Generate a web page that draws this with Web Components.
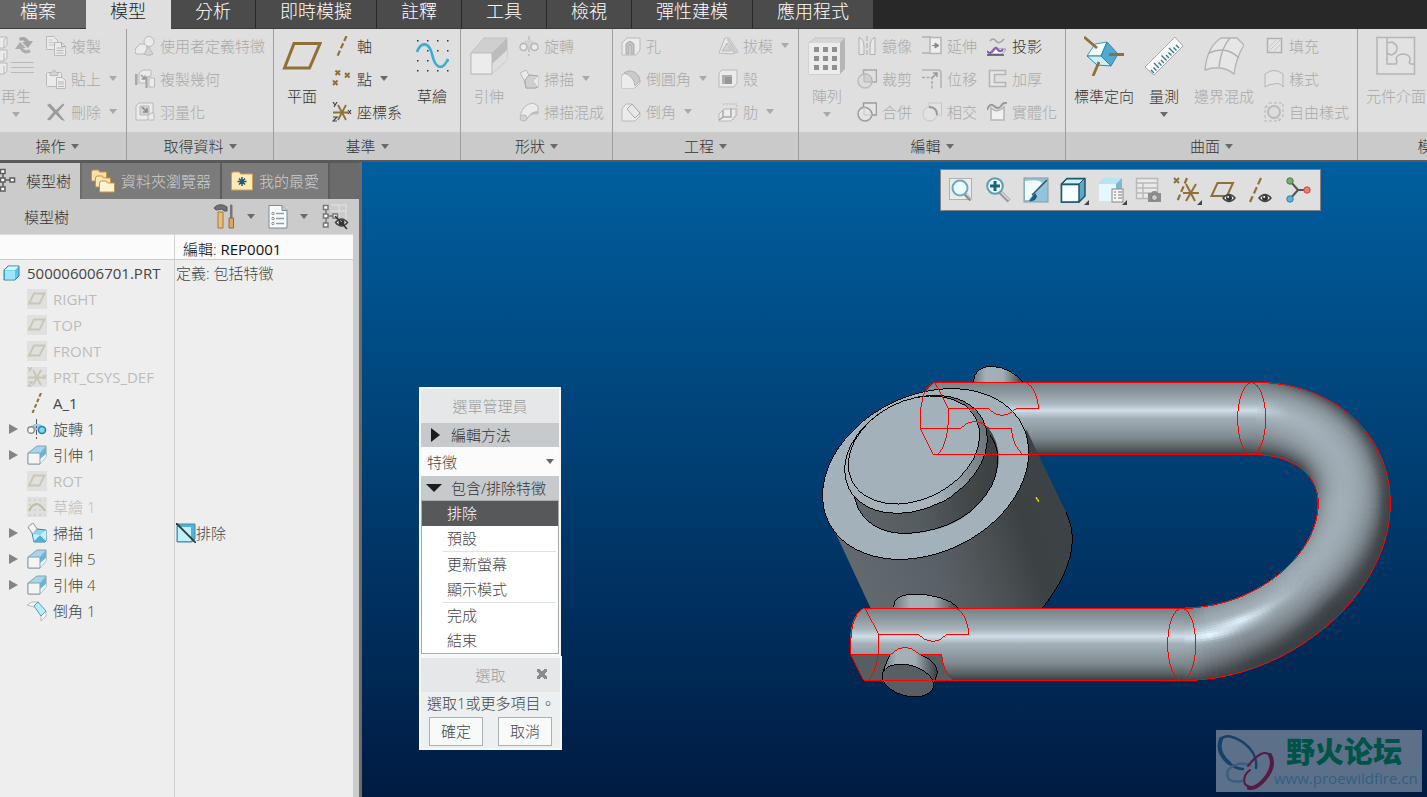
<!DOCTYPE html>
<html lang="zh-Hant">
<head>
<meta charset="utf-8">
<title>500006006701.PRT</title>
<style>
html,body{margin:0;height:100%}
body{font:300 15px/20px "Open Sans","Noto Sans CJK TC",sans-serif;color:#3a3a3a;background:#6b6b6b;overflow:hidden}
</style>
</head>
<body>
<app-shell>
  <ribbon-tabs slot="tabs"></ribbon-tabs>

  <ribbon-group slot="ribbon" name="操作" first style="--gw:139px">
    <ribbon-button big icon="regen" label="再生" menu disabled></ribbon-button>
    <ribbon-column>
      <ribbon-button icon="copy" label="複製" disabled></ribbon-button>
      <ribbon-button icon="paste" label="貼上" menu disabled></ribbon-button>
      <ribbon-button icon="del" label="刪除" menu disabled></ribbon-button>
    </ribbon-column>
  </ribbon-group>
  <ribbon-group slot="ribbon" name="取得資料" inset style="--gw:147px">
    <ribbon-column>
      <ribbon-button icon="udf" label="使用者定義特徵" disabled></ribbon-button>
      <ribbon-button icon="copygeom" label="複製幾何" disabled></ribbon-button>
      <ribbon-button icon="shrink" label="羽量化" disabled></ribbon-button>
    </ribbon-column>
  </ribbon-group>
  <ribbon-group slot="ribbon" name="基準" style="--gw:187px">
    <ribbon-button big icon="plane" label="平面"></ribbon-button>
    <ribbon-column style="--w:74px">
      <ribbon-button icon="axis" label="軸"></ribbon-button>
      <ribbon-button icon="point" label="點" menu></ribbon-button>
      <ribbon-button icon="csys" label="座標系"></ribbon-button>
    </ribbon-column>
    <ribbon-button big icon="sketch" label="草繪"></ribbon-button>
  </ribbon-group>
  <ribbon-group slot="ribbon" name="形狀" style="--gw:152px">
    <ribbon-button big icon="extrude" label="引伸" disabled></ribbon-button>
    <ribbon-column>
      <ribbon-button icon="revolve" label="旋轉" disabled></ribbon-button>
      <ribbon-button icon="sweep" label="掃描" menu disabled></ribbon-button>
      <ribbon-button icon="sweptblend" label="掃描混成" disabled></ribbon-button>
    </ribbon-column>
  </ribbon-group>
  <ribbon-group slot="ribbon" name="工程" inset style="--gw:186px">
    <ribbon-column style="--w:97px">
      <ribbon-button icon="hole" label="孔" disabled></ribbon-button>
      <ribbon-button icon="round" label="倒圓角" menu disabled></ribbon-button>
      <ribbon-button icon="chamfer" label="倒角" menu disabled></ribbon-button>
    </ribbon-column>
    <ribbon-column>
      <ribbon-button icon="draft" label="拔模" menu disabled></ribbon-button>
      <ribbon-button icon="shell" label="殼" disabled></ribbon-button>
      <ribbon-button icon="rib" label="肋" menu disabled></ribbon-button>
    </ribbon-column>
  </ribbon-group>
  <ribbon-group slot="ribbon" name="編輯" style="--gw:267px">
    <ribbon-button big icon="pattern" label="陣列" menu disabled></ribbon-button>
    <ribbon-column style="--w:65px">
      <ribbon-button icon="mirror" label="鏡像" disabled></ribbon-button>
      <ribbon-button icon="trim" label="裁剪" disabled></ribbon-button>
      <ribbon-button icon="merge" label="合併" disabled></ribbon-button>
    </ribbon-column>
    <ribbon-column style="--w:65px">
      <ribbon-button icon="extend" label="延伸" disabled></ribbon-button>
      <ribbon-button icon="offset" label="位移" disabled></ribbon-button>
      <ribbon-button icon="intersect" label="相交" disabled></ribbon-button>
    </ribbon-column>
    <ribbon-column>
      <ribbon-button icon="project" label="投影"></ribbon-button>
      <ribbon-button icon="thicken" label="加厚" disabled></ribbon-button>
      <ribbon-button icon="solidify" label="實體化" disabled></ribbon-button>
    </ribbon-column>
  </ribbon-group>
  <ribbon-group slot="ribbon" name="曲面" style="--gw:292px">
    <ribbon-button big icon="orient" label="標準定向" style="--w:76px"></ribbon-button>
    <ribbon-button big icon="measure" label="量測" menu style="--w:44px"></ribbon-button>
    <ribbon-button big icon="boundary" label="邊界混成" disabled style="--w:76px"></ribbon-button>
    <ribbon-column>
      <ribbon-button icon="fill" label="填充" disabled></ribbon-button>
      <ribbon-button icon="style" label="樣式" disabled></ribbon-button>
      <ribbon-button icon="freestyle" label="自由樣式" disabled></ribbon-button>
    </ribbon-column>
  </ribbon-group>
  <ribbon-group slot="ribbon" name="模型意圖" style="--gw:193px">
    <ribbon-button big icon="component" label="元件介面" disabled style="--w:76px"></ribbon-button>
  </ribbon-group>

  <side-panel slot="side"><model-tree></model-tree></side-panel>

  <graphics-area slot="view">
    <view-toolbar slot="toolbar"></view-toolbar>
    <menu-manager slot="menu"></menu-manager>
    <forum-mark slot="mark"></forum-mark>
  </graphics-area>
</app-shell>

<script>
const B = '#8f7138', G = 'fill="#ebebeb" stroke="#b9b9b9"', GD = 'fill="#d3d3d3" stroke="#b9b9b9"', N = 'fill="none"';
const csysS = (c, d) => `<path d="M6 3l8 15M14 3L6 18M1 10.500h15" ${N} stroke="${c}" stroke-width="1.800"/><path d="M1 0l2 3M5 0L2 5M1 15h4l-4 4h4M16 8l3 4M19 8l-3 4" ${N} stroke="${d}" stroke-width="1.200"/>`;
const extrudeS = (a, b, f, s) => `<path d="M1 8L10 1H19V12L13 19H1Z" fill="${a}" stroke="${s}"/><path d="M19 1V12L13 19V8Z" fill="${b}"/><path d="M13 19V14L19 9V12Z" fill="#e8fbff"/><path d="M1 8h12v11H1z" fill="${f}" stroke="${s}"/>`;
const treeG = c => `<g fill="#fff" stroke="${c}" stroke-width="1.500"><path d="M4 6v14M4 12h7" ${N}/><rect x="1.500" y="1.500" width="4.500" height="4"/><rect x="1.500" y="10" width="4.500" height="4"/><rect x="1.500" y="19" width="4.500" height="4"/><rect x="11" y="10" width="4.500" height="4"/></g>`;
const eye = (x, y) => `<g transform="translate(${x} ${y})"><path d="M-6 0Q0-7 6 0Q0 7-6 0Z" fill="#f4f4f4" stroke="#444" stroke-width="1.500"/><circle r="3" fill="#333"/><circle cx="-.8" cy="-1" r="1" fill="#fff"/></g>`;
const tinyX = (x, y, s) => `<path d="M${x} ${y}l${s} ${s}M${x + s} ${y}l-${s} ${s}" ${N} stroke="${B}" stroke-width="2"/>`;

/* name: [width, height, drawing] */
const ICONS = {
regen:[40,40,`<g ${G}><path d="M-2 4l4-3h9v8l-3 3h-10zM-2 17l4-3h9v8l-3 3h-10zM-2 30l4-3h9v8l-3 3h-10z"/><path d="M8 4v8M8 4l3-3M8 17v8M8 30v8" ${N}/></g><g fill="#a5a5a5"><path d="M23 2q6-3 10 3l4 0-5 7-6-6h3q-2-3-5-1z" /><path d="M35 16q-7 4-11-3h-5l5-7 6 6h-3q3 4 6 1z" opacity=".85"/></g><path d="M15 26.500h23M15 31.500h23M15 36.500h23" stroke="#b9b9b9"/>`],
copy:[20,20,`<path d="M.5.500h7l4 4v9H.5z" ${G}/><path d="M2.500 4h4M2.500 6.500h6M2.500 9h6" stroke="#c5c5c5"/><path d="M8.500 6.500h7l4 4v9H8.500z" ${G}/><path d="M15.500 6.500v4h4" ${N} stroke="#aaa"/><path d="M10.500 12h7M10.500 14.500h7M10.500 17h7" stroke="#b5b5b5"/>`],
paste:[20,20,`<rect x=".5" y="3.500" width="15" height="14" rx="1" ${G}/><path d="M4 3.500h2q2-5 4 0h2v3H4z" ${GD}/><path d="M10.500 8.500h6l3 3v8h-9z" ${G}/><path d="M12 13h6M12 15h6M12 17.500h6" stroke="#b5b5b5"/>`],
del:[20,20,`<path d="M1 3L4 1.500 10 8 17 1.500 18.500 2.500 12 10 19 19 15.500 18 9.500 12 4 18.500 1 17.500 7.500 10Z" fill="#9c9c9c"/>`],
udf:[20,20,`<path d="M1 12l4-4h7v8l-2 2H1q-2-3 0-6z" ${G}/><path d="M13 8q3 8 5 10-4 3-9 0l3-5z" ${GD}/><circle cx="14" cy="5.500" r="5" ${G}/>`],
copygeom:[20,20,`<path d="M.5 5v11M1.500 5v11" stroke="#a8a8a8" stroke-width="2"/><path d="M4 4l4-3h8v6l-5 1v6H4z" ${G}/><path d="M6 6l4 4M10 6.500V10H6.500" ${N} stroke="#999" stroke-width="1.500"/><path d="M11.500 8v11" stroke="#a0a0a0" stroke-width="2"/><path d="M14 9h5.500v9H14z" ${G}/>`],
shrink:[20,20,`<path d="M1 4l3-3h14v9l-4 5-2 3H1z" ${G}/><path d="M5 4h9v9H5z" ${GD}/><path d="M7 5l5 5M12 6v4H8" ${N} stroke="#888" stroke-width="1.600"/><path d="M13 14l3-3h3v7h-6z" ${G}/>`],
plane:[40,40,`<path d="M12 7.500H38L27.500 32H2.500Z" ${N} stroke="${B}" stroke-width="3"/>`],
axis:[20,20,`<path d="M14.500 0L5.500 20" ${N} stroke="${B}" stroke-width="2.200" stroke-dasharray="5.500 2.500"/>`],
point:[20,20,tinyX(3.500,1.500,4.500)+tinyX(13,4,4.500)+tinyX(1,11.500,4.500)],
csys:[20,20,csysS(B,'#444')],
sketch:[40,40,`<g fill="#333"><rect x="5" y="4" width="1.500" height="1.500"/><rect x="15" y="4" width="1.500" height="1.500"/><rect x="25" y="4" width="1.500" height="1.500"/><rect x="35" y="4" width="1.500" height="1.500"/><rect x="15" y="14" width="1.500" height="1.500"/><rect x="25" y="14" width="1.500" height="1.500"/><rect x="35" y="14" width="1.500" height="1.500"/><rect x="5" y="24" width="1.500" height="1.500"/><rect x="15" y="24" width="1.500" height="1.500"/><rect x="35" y="24" width="1.500" height="1.500"/><rect x="5" y="34" width="1.500" height="1.500"/><rect x="15" y="34" width="1.500" height="1.500"/><rect x="25" y="34" width="1.500" height="1.500"/><rect x="35" y="34" width="1.500" height="1.500"/></g><path d="M5 16C9 5 17 6 20 18C23 32 30 36 36 23" ${N} stroke="#36addd" stroke-width="2.600"/>`],
extrude:[40,40,`<path d="M2 17L15 2H38V24L23 38H2Z" fill="#cfcfcf" stroke="#c2c2c2"/><path d="M38 2V24L23 38V17Z" fill="#bcbcbc"/><path d="M23 38V28L38 14V24Z" fill="#dedede"/><path d="M2 17h21v21H2z" fill="#ececec" stroke="#bbb"/>`],
revolve:[20,20,`<path d="M10 0v20" stroke="#aaa" stroke-dasharray="5 2 2 2"/><path d="M2 7q8-6 16 0l-2 6h-4l-2-2-2 2H4z" fill="#d2d2d2"/><g fill="#ebebeb" stroke="#b5b5b5" stroke-width="1.500"><circle cx="4.500" cy="11" r="3.500"/><circle cx="15.500" cy="11" r="3.500"/></g>`],
sweep:[20,20,`<path d="M1 4l6-3 3 5 9 1v11l-3 1H7L5 11z" ${G}/><path d="M6 11l4-5 9 1-5 5 5 6-3 1H7z" fill="#cfcfcf" stroke="#a9a9a9"/><path d="M14 12l5-5v11z" fill="#e9e9e9"/>`],
sweptblend:[20,20,`<path d="M1 14Q4 2 14 1L19 4V12Q11 10 8 17z" ${G}/><path d="M8 17Q11 9 19 9v3q-8-1-11 5z" fill="#bbb"/><ellipse cx="4.500" cy="16" rx="3.500" ry="3" ${GD}/>`],
hole:[20,20,`<path d="M1 7l5-5h13v12l-4 5H1z" ${G}/><path d="M5 18V8q4-5 8 0l0 10h-3V9H8v9z" fill="#c4c4c4" stroke="#aaa"/>`],
round:[20,20,`<path d="M1 6q4-4 8-4 9 1 10 10v2l-5 5H1z" ${G}/><path d="M3 4q3-2 6-2 9 1 10 10l-5 5Q13 7 3 4z" fill="#cacaca" stroke="#b5b5b5"/><path d="M1 7q12 1 12 12H1z" fill="#ececec"/>`],
chamfer:[20,20,`<path d="M1 7l4-5h6l8 9v3l-5 5H1z" ${G}/><path d="M6 7l5-5 8 9-5 5z" fill="#e8e8e8" stroke="#a8a8a8"/>`],
draft:[20,20,`<path d="M1 17L7 2h4l9 14-5 2z" ${G}/><path d="M10 2l9 14-4 2-6-14z" fill="#c9c9c9"/><path d="M4 15l5-8 4 8z" ${GD}/>`],
shell:[20,20,`<path d="M1 4l3-3h15v13l-3 4H1z" ${G}/><path d="M4 6h10v9H4z" fill="#aeaeae"/><path d="M7 8h7v7H7z" fill="#979797"/>`],
rib:[20,20,`<path d="M5 2h14v11l-4 5" ${N} stroke="#bbb" stroke-dasharray="2 1"/><path d="M1 12l5-5h12v6l-5 6H1z" ${G}/><path d="M5 8v7l-4 3M5 15h8V6" ${N} stroke="#a9a9a9" stroke-width="1.500"/>`],
pattern:[40,40,`<path d="M2 7L8 2H38L33 7V38H2Z" fill="#d6d6d6" stroke="#c2c2c2"/><path d="M33 7l5-5v31l-5 5z" fill="#b6b6b6"/><rect x="2" y="7" width="31" height="31" fill="#ececec"/><g fill="#8f8f8f"><path d="M7 11h5v5H7zM16 11h5v5h-5zM25 11h5v5h-5zM7 20h5v5H7zM16 20h5v5h-5zM25 20h5v5h-5zM7 29h5v5H7zM16 29h5v5h-5zM25 29h5v5h-5z"/></g>`],
mirror:[20,20,`<path d="M10 0v20" stroke="#aaa" stroke-dasharray="5 2"/><path d="M2 1.500q5 1 5 10v7H2zM18 1.500q-5 1-5 10v7h5z" fill="#e8e8e8" stroke="#b0b0b0"/>`],
trim:[20,20,`<path d="M6.500 1h13v12h-13z" fill="#e0e0e0" stroke="#a8a8a8" stroke-width="1.500"/><circle cx="8" cy="12" r="7" fill="#dcdcdc" stroke="#bcbcbc" stroke-width="1.500"/><path d="M7 5h2q6 1 6 8H7z" fill="#d0d0d0" stroke="#b5b5b5"/>`],
merge:[20,20,`<circle cx="8" cy="12" r="7" fill="#e4e4e4" stroke="#9c9c9c" stroke-width="1.500"/><path d="M6.500 5V1h13v12h-4.500q0-7-8.500-8z" fill="#e4e4e4" stroke="#9c9c9c" stroke-width="1.500"/><path d="M7 5v8h8" ${N} stroke="#c8c8c8"/>`],
extend:[20,20,`<path d="M0 1h9M0 17h9" stroke="#bdbdbd" stroke-width="2"/><path d="M8 1.500h11v16H8z" fill="#eee" stroke="#b5b5b5" stroke-width="1.500"/><path d="M10 9.500h6M13 7l4 2.500-4 2.500z" fill="#888" stroke="#888"/>`],
offset:[20,20,`<path d="M0 1h16q3 0 3 3v15" ${N} stroke="#b5b5b5" stroke-width="1.600"/><path d="M0 8.500h10v11" ${N} stroke="#aaa" stroke-dasharray="3 1.500" stroke-width="1.500"/><path d="M10 9l5-5M11 4h4v4" ${N} stroke="#999" stroke-width="1.500"/>`],
intersect:[20,20,`<rect x="7" y="1" width="12.500" height="12" fill="#e2e2e2" stroke="#c6c6c6"/><circle cx="8" cy="12" r="7" fill="#e2e2e2" stroke="#c6c6c6"/><path d="M7 5q8 0 8 8" ${N} stroke="#999" stroke-width="2"/>`],
project:[20,20,`<path d="M3 5q3-4 6 0t8-2" ${N} stroke="#a5a5a5" stroke-width="1.600"/><path d="M1 18l5-5h13l-4 5z" fill="#fff" stroke="#999"/><path d="M0 19h17" stroke="#444" stroke-width="1.400"/><path d="M0 15q3 4 6 0 3-6 5-1 3 3 5-1" ${N} stroke="#8a4fc0" stroke-width="2"/>`],
thicken:[20,20,`<path d="M18.500 1.500h-16v16h16v-4h-11v-8h11z" fill="#e6e6e6" stroke="#b5b5b5" stroke-width="1.500"/>`],
solidify:[20,20,`<path d="M4 6q6 6 13-1v13H4z" fill="#f0f0f0" stroke="#b5b5b5" stroke-width="1.500"/><path d="M0 8q3-8 7-4t7 0q2-4 6-3" ${N} stroke="#999" stroke-width="2"/>`],
orient:[40,40,`<path d="M11 8L23 6 17 20 3 20Z" fill="#f2fcff" stroke="#3a9bbf"/><path d="M23 6l11 12-7 12-10-10z" fill="#4fa9d0" stroke="#2b86ae"/><path d="M3 20h14l10 10-14-1Z" fill="#c9f1fb" stroke="#2b86ae"/><path d="M0 1l13 11M25 18.500h15M15 26L9 40" ${N} stroke="${B}" stroke-width="2.800"/>`],
measure:[40,40,`<path d="M1 31L31 1l8 9L10 39z" fill="#fafafa" stroke="#a8a8a8"/><g stroke="#2f7894" stroke-width="1.400"><path d="M10 37l-3-3M12.500 34.500l-3-3M15 32l-5-5M17.500 29.500l-3-3M20 27l-3-3M22.500 24.500l-5-5M25 22l-3-3M27.500 19.500l-3-3M30 17l-5-5M32.500 14.500l-3-3M35 12l-3-3"/></g>`],
boundary:[40,40,`<path d="M1 34Q3 11 17 2H33l7 7Q32 22 30 38 18 28 1 34Z" fill="#e6e6e6" stroke="#b4b4b4" stroke-width="1.400"/><path d="M26 2Q17 12 15 31M5 17q17-8 30 5" ${N} stroke="#b0b0b0" stroke-width="1.400"/>`],
fill:[20,20,`<rect x="3.500" y="2.500" width="14" height="14" fill="#e4e4e4" stroke="#b0b0b0" stroke-width="1.500"/><path d="M5 11l7-7M5 15L16 4M10 15l6-6" stroke="#c5c5c5"/>`],
style:[20,20,`<path d="M1 5q9-7 18 0v13q-3-5-9-3-5 0-9 3z" fill="#e2e2e2" stroke="#b5b5b5"/>`],
freestyle:[20,20,`<rect x="1" y="5" width="14" height="14" ${N} stroke="#b5b5b5" stroke-dasharray="3 2"/><path d="M5 1h14v14M1 5l4-4M15 19l4-4" ${N} stroke="#b5b5b5" stroke-dasharray="3 2"/><circle cx="10" cy="10" r="6" fill="#ddd" stroke="#bbb" stroke-width="2"/>`],
component:[40,40,`<path d="M1 1.500h37.500v36.500H1z" fill="#e2e2e2" stroke="#b5b5b5" stroke-width="1.500"/><path d="M11 2v26h9q2-2 0-5 1-5 8-5 7 1 6 7-2 2 1 3h4M11 7l5-1q6 3 5 7-1 5-6 6l-4-2" ${N} stroke="#b5b5b5" stroke-width="1.500"/>`],

/* model tree */
part:[20,20,`<path d="M3 7l4-4h11v10l-4 4H3z" fill="#5ec2ea" stroke="#3f7f9c"/><path d="M3.500 7l4-3.500h10L14 7z" fill="#d9f7ff"/><path d="M4 7.500h10v9H4z" fill="#9be6fb"/>`],
tplane:[20,20,`<rect width="20" height="20" fill="#e0e0e0"/>`+`<path d="M7 4.500H17.500L12.500 14.500H2Z" ${N} stroke="#c9c7b2" stroke-width="1.800"/>`],
tcsys:[20,20,`<rect width="20" height="20" fill="#e0e0e0"/>`+csysS('#c9c7b2','#c0c0b4')],
tsketch:[20,20,`<rect width="20" height="20" fill="#e0e0e0"/><path d="M2 3h16M2 8h16M2 13h16M2 18h16" stroke="#c4c4b8" stroke-dasharray="2 3"/><path d="M2 14Q9 0 18 14" ${N} stroke="#bfbda2" stroke-width="2.200"/>`],
taxis:[20,20,`<path d="M14 0L5.500 20" ${N} stroke="${B}" stroke-width="2" stroke-dasharray="4 2"/>`],
trevolve:[20,20,`<path d="M3 8q7-7 14 0l-3 5-4-2-4 2z" fill="#9ccbe0"/><path d="M9.500 0v20" stroke="#555" stroke-dasharray="5 2 2 2"/><circle cx="4" cy="11" r="3.300" fill="#fff" stroke="#888" stroke-width="1.400"/><circle cx="15" cy="11" r="3.500" fill="#7ed6f5" stroke="#2183ab" stroke-width="1.600"/>`],
textrude:[20,20,extrudeS('#a6d6ec','#6db4d4','#f4f4f4','#8aa0aa')],
tsweep:[20,20,`<path d="M1 4l5-4 4 6 9 1v11l-1 1H7L5 10z" fill="#8fd3ec" stroke="#2d84a8"/><path d="M1 4l5-4 4 6-4 5z" fill="#f6f6f6" stroke="#aaa"/><path d="M7 18l6-6 6 6z" fill="#4fb0d4"/><path d="M13 12l6-5v11zM6 11l7 1-6 6z" fill="#c2f0fb"/>`],
tchamfer:[20,20,`<path d="M0 4l5-3h7L7 6zM14 14l5-4v5l-5 5z" fill="#f7f7f7" stroke="#bbb"/><path d="M7 5l4-4 8 9-5 5z" fill="#b5eefb" stroke="#5a9cb5"/>`],
exclude:[20,20,`<path d="M2 1h17v15l-3 3H1V3z" fill="#4fb4da" stroke="#4b88a0"/><path d="M2 4h13v14H2z" fill="#bdf2fd"/><path d="M0 0l20 20" stroke="#333" stroke-width="1.800"/>`],

/* side panel */
tree:[18,26,`<g transform="translate(-1 0)">${treeG('#5c5c5c')}</g>`],
folders:[24,24,`<g stroke="#c49545"><path d="M.500 3q0-2 2-2h5l1 2h7v9H.500z" fill="#f7dfa6"/><path d="M4.500 9q0-2 2-2h5l1 2h7v9h-15z" fill="#fbe8b8"/><path d="M8.500 14q0-2 2-2h5l1 2h7v9h-15z" fill="#fff3d0"/></g>`],
fav:[22,20,`<path d="M.5 3q0-2 2-2h6l1 2h12v16H.5z" fill="#ffe9b5" stroke="#c9a35c"/><path d="M11 6v9M6.500 10.500h9M8 7.500l6 6M14 7.500l-6 6" stroke="#1f5878" stroke-width="1.500"/>`],
tools:[22,26,`<path d="M1 4q3-4 9-3l4 2v4h-3l-2-2-6 1z" fill="#70727a" stroke="#555"/><path d="M5 8h5v16H5z" fill="#e8bf78" stroke="#a7793a"/><path d="M17.500 1h1.500v13h-1.500z" fill="#777" stroke="#777"/><path d="M16 14h4.500v10H16z" fill="#dba866" stroke="#99682c"/>`],
listdoc:[20,26,`<path d="M1 1.500h13l5 5V24H1z" fill="#f8fafb" stroke="#778e96"/><path d="M14 1.500v5h5" fill="#ccc" stroke="#778e96"/><g stroke="#8ba0a8" stroke-width="1.500"><path d="M8 9.500h8M8 14.500h8M8 19.500h8"/></g><g ${N} stroke="#8a8a8a"><circle cx="5" cy="9.500" r="1.200"/><circle cx="5" cy="14.500" r="1.200"/><circle cx="5" cy="19.500" r="1.200"/></g>`],
treeeye:[28,26,`<path d="M9 1h15v16M17 1v12M9 7h15" ${N} stroke="#dcdcdc" stroke-width="1.400"/>${treeG('#777')}${eye(19.500,18.500)}<path d="M13 12l12 13" stroke="#333" stroke-width="1.500"/>`],

/* view toolbar */
refit:[26,26,`<rect x="1.500" y="1.500" width="22" height="21" fill="#ececec" stroke="#b0b0b0"/><path d="M17 17l6 6" stroke="#888" stroke-width="3.500"/><path d="M17.500 16l7 7" stroke="#d0d0d0" stroke-width="1.500"/><circle cx="12" cy="11" r="7.500" fill="#eafaff" stroke="#6fa8bd" stroke-width="2"/>`],
zoomin:[26,26,`<path d="M15 15l9 9" stroke="#999" stroke-width="4"/><path d="M16 15l8 8" stroke="#ddd" stroke-width="1.500"/><circle cx="10" cy="9" r="7.800" fill="#eefaff" stroke="#5c9cb4" stroke-width="2"/><path d="M10 4v10M5 9h10" stroke="#14628a" stroke-width="3"/>`],
repaint:[26,26,`<rect x="1" y="1" width="24" height="24" fill="#8fc4db" stroke="#8b9aa0"/><path d="M2 4q14-2 17 2L6 23H2z" fill="#eefcff"/><path d="M24 3L9 18" stroke="#3c4d55" stroke-width="1.400"/><path d="M12 16l-6 8q7 1 8-5z" fill="#1b5a7c"/>`],
shaded:[26,26,`<path d="M1.500 7L7 1.500h18V19L19 25H1.500z" fill="#63a5c2" stroke="#1d566f" stroke-width="1.500"/><path d="M2 7l5-5h17l-5 5z" fill="#cdf0fa" stroke="#1d566f"/><path d="M1.500 7.500h17.500V25H1.500z" fill="#f5fdff" stroke="#1d566f" stroke-width="1.500"/>`],
saved:[26,26,`<path d="M1 7l6-6h17v15l-6 7H1z" fill="#7db9d3"/><path d="M1 7l6-6h17l-6 6z" fill="#b9e4f2"/><path d="M1 7h17v17H1z" fill="#e4f8fd"/><rect x="14" y="12" width="11" height="13" fill="#f4f4f4" stroke="#888"/><path d="M16 15h2M20 15h4M16 18h2M20 18h4M16 21h2M20 21h4" stroke="#777"/>`],
viewmgr:[26,26,`<path d="M1.500 1.500h21v20h-21zM1.500 6h21M1.500 11h21M1.500 16h21M8 6v16" fill="#e9e9e9" stroke="#b9b9b9" stroke-width="1.500"/><path d="M13 16h3l2-2h3l2 2h3v9H13z" fill="#8d8d8d"/><circle cx="19.500" cy="20.500" r="3" fill="#ccc" stroke="#777"/>`],
datum:[26,26,tinyX(1,1,5)+`<path d="M14 1L4 25" ${N} stroke="${B}" stroke-width="2.200" stroke-dasharray="6 3"/><path d="M13 7l9 17M23 7l-10 17M10 16h16" ${N} stroke="${B}" stroke-width="2"/>`],
planeeye:[26,26,`<path d="M7.500 6H23L17 19H1.500Z" ${N} stroke="${B}" stroke-width="2"/>${eye(19,21)}`],
axiseye:[26,26,`<path d="M13 1L2 25" ${N} stroke="${B}" stroke-width="2.200" stroke-dasharray="7 3"/>${eye(17,21)}`],
spin:[26,26,`<path d="M5 4l8 9h10M13 13L5 22" ${N} stroke="#5a5050" stroke-width="2"/><circle cx="5" cy="4" r="3.200" fill="#74b06b" stroke="#4a7d44"/><circle cx="22" cy="13" r="3.200" fill="#f07c70" stroke="#c24d44"/><circle cx="5" cy="22" r="3.200" fill="#5fb2dc" stroke="#347d9f"/>`]
};
const svg = n => { const [w, h, d] = ICONS[n]; return `<svg width="${w}" height="${h}" viewBox="0 0 ${w} ${h}" aria-hidden="true">${d}</svg>`; };

function component(name, css, view) {
  customElements.define(name, class extends HTMLElement {
    connectedCallback() {
      if (this.shadowRoot) return;
      this.attachShadow({ mode: 'open' }).innerHTML = `<style>:host,*{box-sizing:border-box}svg{display:block;flex:none}button,select{font:inherit;color:inherit}${css}</style>${view(this)}`;
    }
  });
}
const ARROW = '.arrow{flex:none;width:0;height:0;border:solid transparent;border-width:5px 4px 0;border-top-color:#6a6a6a}';

component('app-shell', `
:host{display:grid;grid-template-rows:29px 133px minmax(0,1fr);height:100vh;overflow:hidden}
.ribbon{display:flex;background:#dfdfdf;border-bottom:2px solid #5a5a5a;overflow:hidden}
main{display:grid;grid-template-columns:362px minmax(0,1fr);min-height:0}`,
() => `<slot name="tabs"></slot><div class="ribbon"><slot name="ribbon"></slot></div><main><slot name="side"></slot><slot name="view"></slot></main>`);

component('ribbon-tabs', `
:host{display:block;background:#282828}
nav{display:flex;height:29px}
button{border:0;border-right:1px solid #282828;border-bottom:1px solid #3c3c3c;background:#4b4b4b;color:#fff;font-size:18px;line-height:22px;padding:0 24px 6px;white-space:nowrap;margin:0}
button.file{background:#666;padding-left:20px;padding-right:30px;border-right:0}
button.on{background:#dfdfdf;color:#222;border-color:#dfdfdf}`,
() => `<nav>${['檔案','模型','分析','即時模擬','註釋','工具','檢視','彈性建模','應用程式'].map((t, i) => `<button class="${i == 0 ? 'file' : i == 1 ? 'on' : ''}">${t}</button>`).join('')}</nav>`);

component('ribbon-group', `
:host{display:flex;flex-direction:column;flex:0 0 var(--gw);width:var(--gw);border-right:1px solid #9e9e9e}
:host([first]){margin-left:-12px}
.items{display:flex;flex:1}
:host([inset]) .items{padding-left:6px}
footer{display:flex;align-items:center;justify-content:center;gap:5px;height:28px;background:#cacaca;color:#333}${ARROW}`,
e => `<div class="items"><slot></slot></div><footer>${e.getAttribute('name')}<span class="arrow"></span></footer>`);

component('ribbon-column', `:host{display:flex;flex-direction:column;width:var(--w,auto)}`, () => `<slot></slot>`);

component('ribbon-button', `
:host{display:block;width:var(--w,auto);height:33px}
:host([big]){width:var(--w,56px);height:100%}
button{display:flex;align-items:center;gap:5px;width:100%;height:100%;padding:0 2px;border:0;background:none;color:#333;white-space:nowrap}
:host([big]) button{flex-direction:column;gap:0;padding:7px 0 0}
:host([big]) svg{margin-bottom:10px}
:host([big]) .arrow{margin-top:6px}
:host(:not([big])) .arrow{margin-left:3px}
button:disabled{color:#a9a9a9}
${ARROW}button:disabled .arrow{border-top-color:#a9a9a9}`,
e => `<button ${e.hasAttribute('disabled') ? 'disabled' : ''}>${svg(e.getAttribute('icon'))}<span>${e.getAttribute('label')}</span>${e.hasAttribute('menu') ? '<span class="arrow"></span>' : ''}</button>`);

component('side-panel', `
:host{display:flex;flex-direction:column;min-height:0;background:#6b6b6b;padding-right:3px}
.tabs{display:flex;height:37px;border-top:1px solid #595959;background:#6b6b6b}
.tabs button{display:flex;align-items:center;border:0;border-right:2px solid #5c5c5c;background:#7b7b7b;color:#cfcfcf;padding:0 9px;gap:6px;white-space:nowrap}
.tabs button.on{background:#cbcbcb;color:#333;padding:0 9px 0 0;gap:8px;border-color:#6b6b6b}
.body{display:flex;flex-direction:column;flex:1;min-height:0;background:#cbcbcb;padding-right:6px}
header{display:flex;align-items:center;height:35px;padding-left:24px;color:#333}
header span{flex:1}
header button{display:flex;align-items:center;gap:12px;border:0;padding:0;background:none;margin-left:13px}
header button:last-child{margin-left:14px;margin-right:3px}${ARROW}`,
() => `<div class="tabs"><button class="on">${svg('tree')}模型樹</button><button>${svg('folders')}資料夾瀏覽器</button><button>${svg('fav')}我的最愛</button></div>
<div class="body"><header><span>模型樹</span><button aria-label="設定">${svg('tools')}<i class="arrow"></i></button><button aria-label="顯示">${svg('listdoc')}<i class="arrow"></i></button><button aria-label="隱藏">${svg('treeeye')}</button></header><slot></slot></div>`);

const ROWS = [['part','500006006701.PRT','root'],['tplane','RIGHT','off'],['tplane','TOP','off'],['tplane','FRONT','off'],['tcsys','PRT_CSYS_DEF','off'],['taxis','A_1',''],['trevolve','旋轉 1','exp'],['textrude','引伸 1','exp'],['tplane','ROT','off'],['tsketch','草繪 1','off'],['tsweep','掃描 1','exp'],['textrude','引伸 5','exp'],['textrude','引伸 4','exp'],['tchamfer','倒角 1','']];
component('model-tree', `
:host{display:block;flex:1;min-height:0;background:linear-gradient(#d0d0d0,#d0d0d0) 174px 0/1px 100% no-repeat #eee}
table{border-collapse:separate;border-spacing:0;width:100%;table-layout:fixed;line-height:20px}
col:first-child{width:175px}
th{height:26px;padding:3px 8px 0;background:#fbfbfb;border-top:1px solid #ddd;border-bottom:1px solid #c8cccc;font-weight:inherit;text-align:left;color:#111}
th:first-child,td:first-child{border-right:1px solid #d0d0d0}
td{height:26px;padding:0 1px;color:#444;white-space:nowrap}
.latin{font-weight:400}
.cell{display:flex;align-items:center;gap:6px;padding-left:26px}
.exp .cell{padding-left:8px}
.exp .cell::before{content:"";flex:none;border:solid transparent;border-width:5px 0 5px 9px;border-left-color:#848484;margin-right:3px}
.root .cell{padding-left:0}
.off td{color:#bcbcbc}
.ex{display:flex;align-items:center}`,
() => `<table><colgroup><col><col></colgroup><thead><tr><th></th><th>編輯: <span class="latin">REP0001</span></th></tr></thead><tbody>${ROWS.map(([i, t, c]) => `<tr class="${c}"><td><div class="cell${/^[\x20-\x7e]+$/.test(t) ? ' latin' : ''}">${svg(i)}${t}</div></td><td>${c == 'root' ? '定義: 包括特徵' : i == 'tsweep' ? `<div class="ex">${svg('exclude')}排除</div>` : ''}</td></tr>`).join('')}</tbody></table>`);

/* Bent tube: a mesh between the outer and the inner silhouette, lit by a profile across the tube */
const bez = (p, t) => [0, 1].map(k => (1 - t) ** 3 * p[0][k] + 3 * (1 - t) ** 2 * t * p[1][k] + 3 * (1 - t) * t * t * p[2][k] + t ** 3 * p[3][k]);
const OUT = [[[485,38],[700,44],[871,190],[871,400]],[[871,400],[871,680],[560,931],[255,931]]];
const INN = [[[455,253],[575,253],[655,310],[655,400]],[[655,400],[655,560],[460,714],[255,714]]];
const LIGHT = [[0,[120,140,158,185,216,180,162,148,130,105,65]],[.1,[90,132,156,170,182,178,168,156,136,108,68]],[.25,[70,120,150,164,172,176,172,164,148,118,75]],[.5,[65,76,120,145,160,168,174,176,172,162,140]],[.72,[65,65,72,104,130,150,163,172,176,172,160]],[.8,[65,65,78,108,132,148,162,194,180,168,155]],[.88,[65,66,90,115,135,148,192,248,180,168,152]],[.95,[66,84,110,130,146,164,255,205,174,164,148]],[1,[65,105,130,148,160,176,228,185,158,140,120]]];
function bend() {
  const U = 90, V = 30, out = [];
  const pt = (s, u) => u < .5 ? bez(s[0], u * 2) : bez(s[1], u * 2 - 1);
  const mix = (u, v) => { const a = pt(OUT, u), b = pt(INN, u); return `${(a[0] + (b[0] - a[0]) * v).toFixed(1)} ${(a[1] + (b[1] - a[1]) * v).toFixed(1)}`; };
  const at = (r, v) => { const i = Math.min(9, Math.floor(v * 10)), f = v * 10 - i; return r[i] + (r[i + 1] - r[i]) * f; };
  for (let i = 0; i < U; i++) for (let j = 0; j < V; j++) {
    const u = (i + .5) / U, v = (j + .5) / V;
    let k = 0; while (LIGHT[k + 1][0] < u) k++;
    const f = (u - LIGHT[k][0]) / (LIGHT[k + 1][0] - LIGHT[k][0]);
    const g = at(LIGHT[k][1], v) * (1 - f) + at(LIGHT[k + 1][1], v) * f;
    const c = `rgb(${Math.round(g * .93)},${Math.round(g)},${Math.min(255, Math.round(g * 1.045))})`;
    out.push(`<path d="M${mix(i / U, j / V)}L${mix((i + 1) / U, j / V)} ${mix((i + 1) / U, (j + 1) / V)} ${mix(i / U, (j + 1) / V)}Z" fill="${c}" stroke="${c}" stroke-width="3"/>`);
  }
  return out.join('');
}
const END = `<path d="M650 83Q680 100 686 160H620Q577 203 533 160H415L375 83M365 83Q331 110 331 190V220L370 298M415 160Q419 260 385 298M331 220H452Q492 178 538 220H604Q608 272 638 298"/>`;
component('graphics-area', `
:host{display:block;position:relative;overflow:hidden;background:linear-gradient(#005f9f,#001b42)}
.scene{position:absolute;inset:0;width:100%;height:100%}
.e,ellipse,.r path{shape-rendering:crispEdges}
.e{fill:none;stroke:#000;stroke-width:3}.r{fill:none;stroke:#f00;stroke-width:3}`,
() => `<svg class="scene" viewBox="362 162 1065 635" preserveAspectRatio="xMidYMid slice" role="img" aria-label="3D">
<defs>
<linearGradient id="rod" x1="0" y1="0" x2="0" y2="1"><stop offset="0" stop-color="#768186"/><stop offset=".15" stop-color="#8e999f"/><stop offset=".3" stop-color="#aab6be"/><stop offset=".39" stop-color="#cfdde7"/><stop offset=".5" stop-color="#a2afb7"/><stop offset=".75" stop-color="#828d93"/><stop offset=".9" stop-color="#5c6468"/><stop offset="1" stop-color="#3a3f41"/></linearGradient>
<linearGradient id="body" x1="0" y1=".55" x2="1" y2=".3"><stop offset="0" stop-color="#626a70"/><stop offset=".35" stop-color="#5a6166"/><stop offset=".6" stop-color="#4a4f52"/><stop offset=".75" stop-color="#3c4144"/><stop offset="1" stop-color="#3d4346"/></linearGradient>
<linearGradient id="collar" x1="0" y1="0" x2="1" y2="0"><stop offset="0" stop-color="#5f676c"/><stop offset=".5" stop-color="#555c60"/><stop offset=".8" stop-color="#42474a"/><stop offset="1" stop-color="#3b4043"/></linearGradient>
<linearGradient id="cham" x1="0" y1="0" x2="1" y2="0"><stop offset="0" stop-color="#a4b1b9"/><stop offset=".45" stop-color="#a8b5bd"/><stop offset=".7" stop-color="#8a969c"/><stop offset="1" stop-color="#69747a"/></linearGradient>
<linearGradient id="pin" x1="0" y1="0" x2="1" y2="0"><stop offset="0" stop-color="#6d777c"/><stop offset=".25" stop-color="#a4b1b9"/><stop offset=".6" stop-color="#a0adb5"/><stop offset=".85" stop-color="#5d666a"/><stop offset="1" stop-color="#363b3d"/></linearGradient>
</defs>
<g transform="translate(810 355) scale(.33333)">
<path d="M490 84Q492 34 545 34Q600 36 640 84Z" fill="url(#pin)"/><path class="e" d="M490 82Q492 34 545 34Q600 36 640 82"/>
<path d="M375 82H1360V298H375Q331 290 331 190Q335 105 375 82Z" fill="url(#rod)"/>
<path d="M650 225L768 472C797 530 805 625 695 762H183L75 530Z" fill="url(#body)"/><path class="e" d="M768 472C797 530 805 625 695 762"/>
<g transform="translate(347 357) rotate(-26.400)"><ellipse rx="325" ry="236" fill="#a3b1ba" stroke="#000" stroke-width="3"/></g>
<path d="M103 345L145 460Q190 545 310 535Q480 520 548 385Q590 290 533 215Z" fill="url(#collar)"/>
<path class="e" d="M132 425L146 463Q190 540 300 535Q475 520 545 392Q585 300 540 240"/>
<g transform="translate(318 298) rotate(-27)"><ellipse rx="226" ry="162" fill="url(#cham)" stroke="#000" stroke-width="3"/></g>
<g transform="translate(312 285) rotate(-27)"><ellipse rx="208" ry="148" fill="#a3b1ba" stroke="#000" stroke-width="3"/></g>
<path d="M251 757Q248 722 300 718Q405 715 449 762H251Z" fill="url(#pin)"/><path class="e" d="M251 757Q248 722 300 718Q405 715 449 762"/>
<path d="M161 760H1150V976H161L122 898V838Q126 780 161 760Z" fill="url(#rod)"/>
<path d="M122 898H395Q399 950 427 976H161Z" fill="#575e62"/>
<path d="M217 960Q228 905 250 893Q283 862 325 895Q385 920 382 955L370 1000Z" fill="url(#pin)"/><path class="e" d="M217 960Q228 920 240 900M329 898Q385 920 382 955L371 988"/>
<g transform="translate(293.500 976.500) rotate(15)"><ellipse rx="79" ry="46" fill="#585f64" stroke="#000" stroke-width="3"/></g>
<path d="M678 427l4 6M683 434l3 6" stroke="#ff0" stroke-width="4"/>
<g transform="translate(870 45)">${bend()}</g>
<g class="r">${END}<g transform="translate(-209 678)">${END}</g>
<path d="M370 82H1360M370 298H1330M161 760H1150M161 976H1160"/>
<g transform="translate(870 45)"><path d="M485 38C700 44 871 190 871 400C871 680 560 931 255 931M455 253C575 253 655 310 655 400C655 560 460 714 255 714"/><ellipse cx="455" cy="146" rx="42" ry="108"/><ellipse cx="245" cy="823" rx="42" ry="108"/></g></g>
</g></svg><slot name="toolbar"></slot><slot name="menu"></slot><slot name="mark"></slot>`);

component('view-toolbar', `
:host{position:absolute;top:7px;right:106px;display:flex;width:381px;height:42px;padding:0 3px 0 1px;background:#dfdfdf;border:1px solid #828282}
button{position:relative;flex:1;display:flex;align-items:center;justify-content:center;border:0;padding:0;background:none}
.m::after{content:"";position:absolute;right:3px;bottom:5px;border:solid transparent;border-width:0 0 5px 5px;border-bottom-color:#444}`,
() => ['refit','zoomin','repaint','shaded','saved','viewmgr','datum','planeeye','axiseye','spin'].map(n => `<button aria-label="${n}" class="${/shaded|saved|datum/.test(n) ? 'm' : ''}">${svg(n)}</button>`).join(''));

component('menu-manager', `
:host{position:absolute;left:57px;top:225px;display:block;color:#444}
section{background:#edf0f1;border:2px solid #f6f9fa}
.a{width:142px}.b{width:143px}
h2{display:flex;align-items:center;justify-content:center;height:34px;margin:0;background:#e5e7e8;color:#9c9c9c;font-size:15px;font-weight:inherit;position:relative}
h3{display:flex;align-items:center;height:24px;margin:0;padding-left:10px;gap:11px;background:#c6cacc;color:#333;font-size:15px;font-weight:inherit;white-space:nowrap}
h3.open{padding-left:5px;gap:9px}
h3::before{content:"";border:solid transparent;border-width:7px 0 7px 9px;border-left-color:#1c1c1c}
h3.open::before{border-width:8px 8px 0;border-top-color:#1c1c1c;border-left-color:transparent}
.sel{position:relative}
select{appearance:none;display:block;width:100%;height:29px;border:0;padding:0 6px;background:#fbfbfb;color:#444}
.sel::after{content:"";position:absolute;right:5px;top:12px;border:solid transparent;border-width:5px 4px 0;border-top-color:#666}
ul{list-style:none;margin:0;padding:0;background:#fff;border:1px solid #a6abad}
li button{display:block;width:100%;height:25px;border:0;background:none;text-align:left;line-height:20px;padding:0 0 2px 25px}
li.on{background:#57585a;color:#fff}
li.sep{height:1px;background:#dfe2e3;margin:0 2px 0 21px}
.close{position:absolute;right:10px;top:7px;width:16px;height:18px;border:0;padding:0;background:none}
.close::after{content:"";display:block;width:10px;height:10px;margin:4px 3px;background:linear-gradient(45deg,transparent 38%,#8c8c8c 38% 62%,transparent 62%),linear-gradient(-45deg,transparent 38%,#8c8c8c 38% 62%,transparent 62%)}
p{margin:0;padding:1px 6px 0;height:25px;white-space:nowrap}
.btns{display:flex;gap:15px;padding:0 8px 2px}
.btns button{width:54px;height:29px;line-height:20px;padding:0 0 2px;background:#f8f9f9;border:1px solid #a9b0b2}`,
() => `<section class="a"><h2>選單管理員</h2><h3>編輯方法</h3><div class="sel"><select aria-label="編輯方法"><option>特徵</option></select></div><h3 class="open">包含/排除特徵</h3><ul><li class="on"><button>排除</button></li><li><button>預設</button></li><li class="sep"></li><li><button>更新螢幕</button></li><li><button>顯示模式</button></li><li class="sep"></li><li><button>完成</button></li><li><button>結束</button></li></ul></section>
<section class="b"><h2>選取<button class="close" aria-label="關閉"></button></h2><p>選取1或更多項目。</p><div class="btns"><button>確定</button><button>取消</button></div></section>`);

component('forum-mark', `
:host{position:absolute;right:5px;bottom:5px;display:flex;width:206px;height:62px;background:#5d7089}
svg{margin:2px 0 0 0}
.t{margin-left:-4px;white-space:nowrap}
b{display:block;font:900 29px/36px "Noto Sans CJK SC",sans-serif;color:#005348;padding:2px 0 0 12px}
a{display:block;font-size:15px;font-weight:400;line-height:20px;text-decoration:none;color:#2f6084}`,
() => `<svg width="62" height="60" viewBox="0 0 62 60"><g fill="none" stroke-linecap="round"><path d="M40 36Q42 22 28 11Q12 0 5 7Q0 20 13 31Q20 37 27 37" stroke="#17406b" stroke-width="2.500"/><path d="M5 7Q0 20 13 31" stroke="#17406b" stroke-width="4"/><path d="M34 33Q20 29 12 38Q8 52 26 49" stroke="#3d5c82" stroke-width="2.500"/><path d="M32 34Q46 16 54 23Q60 34 48 48Q36 60 29 52Q26 44 34 38" stroke="#571b42" stroke-width="2"/><path d="M54 23Q60 34 48 48Q40 57 33 56" stroke="#571b42" stroke-width="4"/></g></svg><div class="t"><b>野火论坛</b><a href="#">www.proewildfire.cn</a></div>`);
</script>
</body>
</html>
